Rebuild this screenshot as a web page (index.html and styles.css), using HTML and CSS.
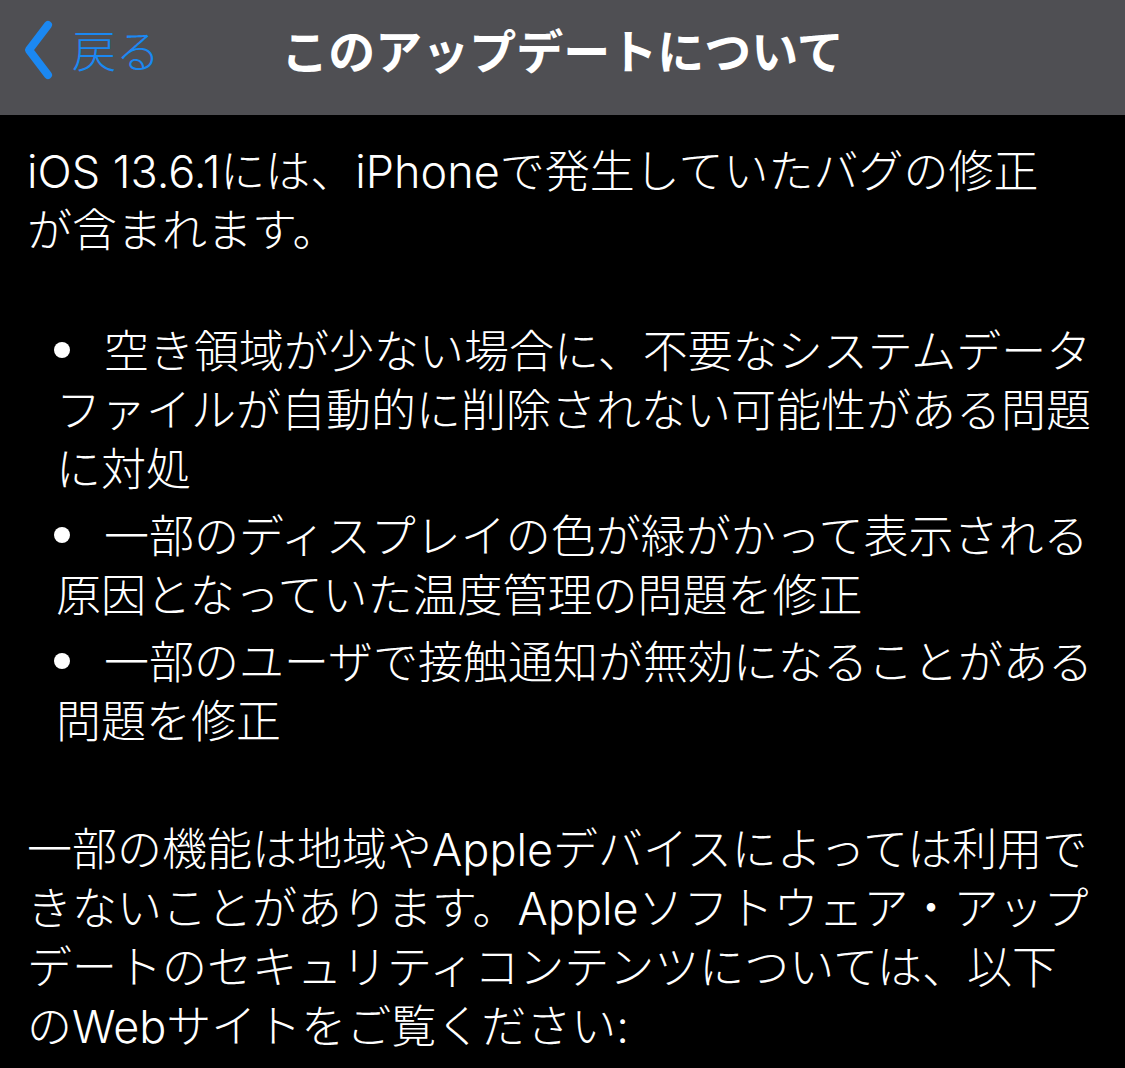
FILE: index.html
```html
<!DOCTYPE html>
<html lang="ja">
<head>
    <meta charset="UTF-8">
    <meta name="viewport" content="width=device-width, initial-scale=1.0">
    <title>このアップデートについて</title>
    <link rel="stylesheet" href="styles.css">
</head>
<body>
    <header class="nav-bar">
        <a class="back-btn" href="#">
            <svg class="chevron" width="34" height="64" viewBox="0 0 34 64">
                <polyline points="26,6 7,31 26,56" fill="none" stroke="currentColor" stroke-width="8" stroke-linecap="round" stroke-linejoin="round"/>
            </svg>
            <span>戻る</span>
        </a>
        <h1 class="nav-title">このアップデートについて</h1>
    </header>

    <main class="notes">
        <p class="intro">iOS 13.6.1には、iPhoneで発生していたバグの修正<br>が含まれます。</p>

        <ul class="fixes">
            <li>空き領域が少ない場合に、不要なシステムデータ<br>ファイルが自動的に削除されない可能性がある問題<br>に対処</li>
            <li>一部のディスプレイの色が緑がかって表示される<br>原因となっていた温度管理の問題を修正</li>
            <li>一部のユーザで接触通知が無効になることがある<br>問題を修正</li>
        </ul>

        <p class="outro">一部の機能は地域やAppleデバイスによっては利用で<br>きないことがあります。Appleソフトウェア・アップ<br>デートのセキュリティコンテンツについては、以下<br>のWebサイトをご覧ください:</p>
    </main>
</body>
</html>
```

FILE: styles.css
```css
html, body {
    margin: 0;
    padding: 0;
    background-color: #000000;
    color: #ffffff;
    font-family: Inter, "Noto Sans CJK JP", sans-serif;
    overflow: hidden;
}
.nav-bar {
    position: relative;
    height: 115px;
    background-color: #4f4f53;
    display: flex;
    align-items: center;
    justify-content: center;
}
.back-btn {
    position: absolute;
    left: 22px;
    top: 19px;
    display: flex;
    align-items: center;
    color: #1b88f2;
    text-decoration: none;
    font-size: 44px;
    font-weight: 300;
    font-family: "Noto Sans CJK JP", sans-serif;
}
.back-btn span {
    margin-left: 16px;
    margin-top: -4px;
}
.nav-title {
    margin: 0 0 18px 0;
    font-size: 47px;
    font-weight: 700;
    font-family: "Noto Sans CJK JP", sans-serif;
}
.notes {
    padding: 27px 0 0 27px;
    font-size: 45px;
    font-weight: 300;
    line-height: 59px;
    white-space: nowrap;
}
.notes p {
    margin: 0;
}
.fixes {
    list-style: none;
    margin: 62px 0 0 0;
    padding: 0 0 0 29px;
}
.fixes li + li {
    margin-top: 8px;
}
.fixes li::before {
    content: "";
    display: inline-block;
    width: 16px;
    height: 16px;
    border-radius: 50%;
    background-color: #ffffff;
    margin: 0 34px 0 -2px;
    vertical-align: 10px;
}
.outro {
    margin-top: 69px !important;
}
```
